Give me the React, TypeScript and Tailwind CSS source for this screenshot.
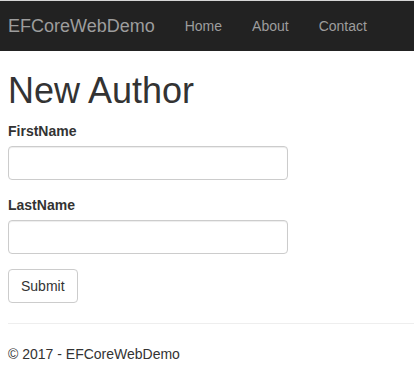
export default function App() {
    return (
        <div className="min-h-[372px] bg-white font-['Liberation_Sans',Arial,sans-serif] text-[14px] leading-[20px] text-[#333]">
            {/* Navbar */}
            <div className="h-px bg-[#d6d6d6]" />
            <nav className="flex h-[50px] items-center bg-[#222] pl-[8px]">
                <a className="pr-[15px] text-[18px] leading-[20px] text-[#9d9d9d]">EFCoreWebDemo</a>
                <ul className="flex">
                    <li><a className="px-[15px] text-[#9d9d9d]">Home</a></li>
                    <li><a className="px-[15px] text-[#9d9d9d]">About</a></li>
                    <li><a className="px-[15px] text-[#9d9d9d]">Contact</a></li>
                </ul>
            </nav>

            {/* Body */}
            <div className="px-[8px]">
                <h1 className="mt-[20px] mb-[10px] text-[36px] leading-[1.1] font-normal">New Author</h1>
                <form>
                    <div className="mb-[15px]">
                        <label className="mb-[5px] block font-bold">FirstName</label>
                        <input className="block h-[34px] w-[280px] rounded-[4px] border border-[#ccc] px-3 shadow-[inset_0_1px_1px_rgba(0,0,0,0.075)] outline-none" />
                    </div>
                    <div className="mb-[15px]">
                        <label className="mb-[5px] block font-bold">LastName</label>
                        <input className="block h-[34px] w-[280px] rounded-[4px] border border-[#ccc] px-3 shadow-[inset_0_1px_1px_rgba(0,0,0,0.075)] outline-none" />
                    </div>
                    <button type="button" className="h-[34px] rounded-[4px] border border-[#ccc] bg-white px-3 text-[#333]">
                        Submit
                    </button>
                </form>
                <hr className="mt-[20px] mb-[20px] mr-[-8px] border-t border-[#eee]" />
                <footer>
                    <p>© 2017 - EFCoreWebDemo</p>
                </footer>
            </div>
        </div>
    );
}
